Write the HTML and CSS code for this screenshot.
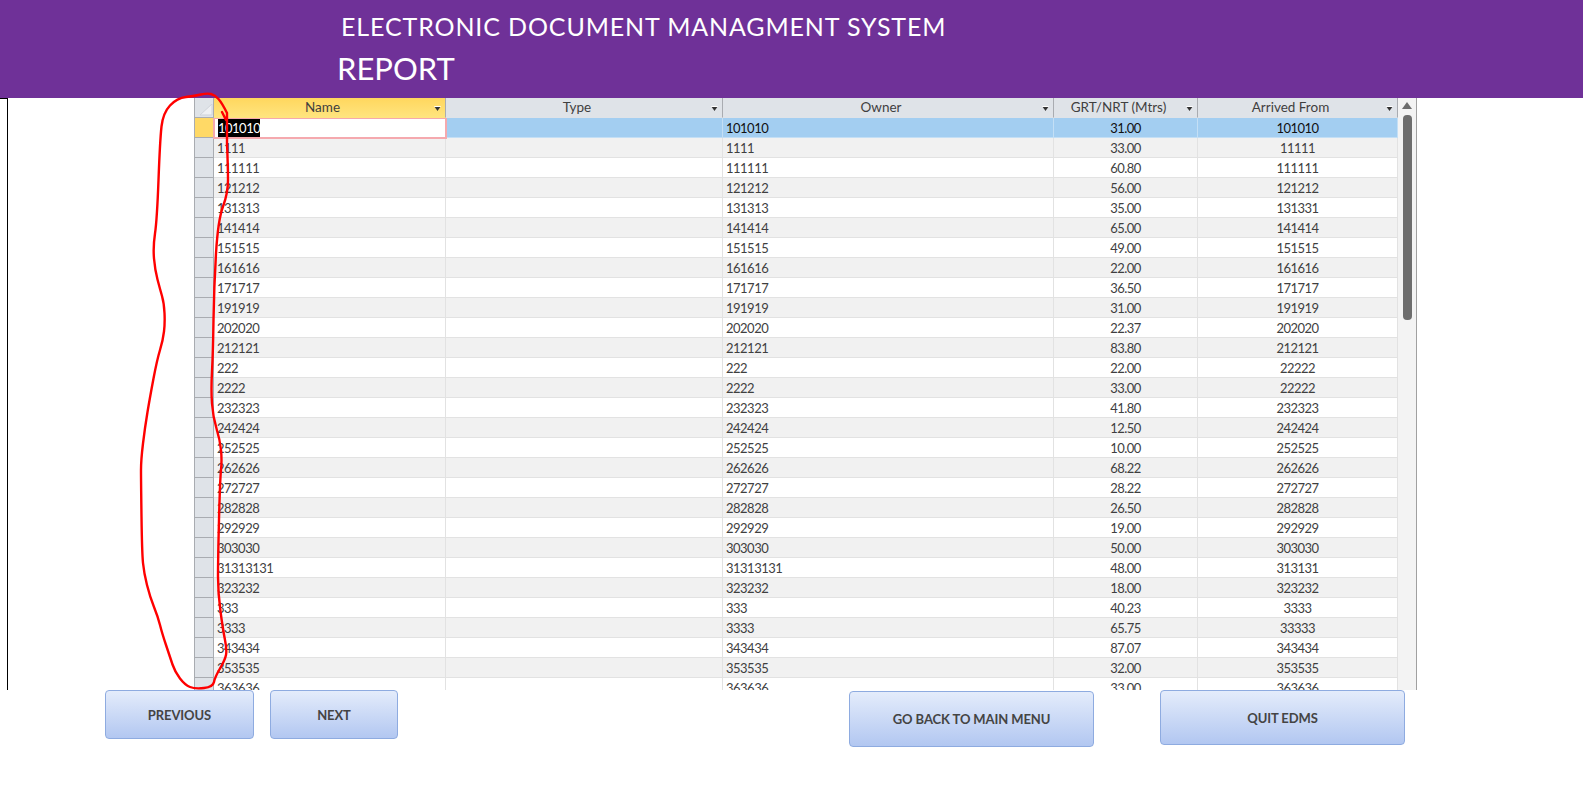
FILE: index.html
```html
<!DOCTYPE html>
<html lang="en">
<head>
    <meta charset="UTF-8">
    <meta name="viewport" content="width=device-width, initial-scale=1.0">
    <title>EDMS Report</title>
    <link rel="stylesheet" href="styles.css">
</head>
<body>
    <header class="banner">
        <div class="banner-title">ELECTRONIC DOCUMENT MANAGMENT SYSTEM</div>
        <div class="banner-sub">REPORT</div>
    </header>

    <main class="content">
        <div class="edge-line"></div>
        <div class="sheet">
            <table class="grid">
                <colgroup>
                    <col class="col-sel">
                    <col class="col-name">
                    <col class="col-type">
                    <col class="col-owner">
                    <col class="col-grt">
                    <col class="col-from">
                </colgroup>
                <thead>
                    <tr>
                        <th class="sel corner">
                            <svg width="13" height="12" viewBox="0 0 13 12"><polygon points="12,0 12,11 0,11" fill="#eef0f3" stroke="#cfd3d9"/></svg>
                        </th>
                        <th class="active">Name</th>
                        <th>Type</th>
                        <th>Owner</th>
                        <th>GRT/NRT (Mtrs)</th>
                        <th>Arrived From</th>
                    </tr>
                </thead>
                <tbody>
                    <tr class="current"><td class="sel"></td><td class="editing"><span class="picked">101010</span></td><td></td><td>101010</td><td class="mid">31.00</td><td class="mid">101010</td></tr>
                    <tr><td class="sel"></td><td>1111</td><td></td><td>1111</td><td class="mid">33.00</td><td class="mid">11111</td></tr>
                    <tr><td class="sel"></td><td>111111</td><td></td><td>111111</td><td class="mid">60.80</td><td class="mid">111111</td></tr>
                    <tr><td class="sel"></td><td>121212</td><td></td><td>121212</td><td class="mid">56.00</td><td class="mid">121212</td></tr>
                    <tr><td class="sel"></td><td>131313</td><td></td><td>131313</td><td class="mid">35.00</td><td class="mid">131331</td></tr>
                    <tr><td class="sel"></td><td>141414</td><td></td><td>141414</td><td class="mid">65.00</td><td class="mid">141414</td></tr>
                    <tr><td class="sel"></td><td>151515</td><td></td><td>151515</td><td class="mid">49.00</td><td class="mid">151515</td></tr>
                    <tr><td class="sel"></td><td>161616</td><td></td><td>161616</td><td class="mid">22.00</td><td class="mid">161616</td></tr>
                    <tr><td class="sel"></td><td>171717</td><td></td><td>171717</td><td class="mid">36.50</td><td class="mid">171717</td></tr>
                    <tr><td class="sel"></td><td>191919</td><td></td><td>191919</td><td class="mid">31.00</td><td class="mid">191919</td></tr>
                    <tr><td class="sel"></td><td>202020</td><td></td><td>202020</td><td class="mid">22.37</td><td class="mid">202020</td></tr>
                    <tr><td class="sel"></td><td>212121</td><td></td><td>212121</td><td class="mid">83.80</td><td class="mid">212121</td></tr>
                    <tr><td class="sel"></td><td>222</td><td></td><td>222</td><td class="mid">22.00</td><td class="mid">22222</td></tr>
                    <tr><td class="sel"></td><td>2222</td><td></td><td>2222</td><td class="mid">33.00</td><td class="mid">22222</td></tr>
                    <tr><td class="sel"></td><td>232323</td><td></td><td>232323</td><td class="mid">41.80</td><td class="mid">232323</td></tr>
                    <tr><td class="sel"></td><td>242424</td><td></td><td>242424</td><td class="mid">12.50</td><td class="mid">242424</td></tr>
                    <tr><td class="sel"></td><td>252525</td><td></td><td>252525</td><td class="mid">10.00</td><td class="mid">252525</td></tr>
                    <tr><td class="sel"></td><td>262626</td><td></td><td>262626</td><td class="mid">68.22</td><td class="mid">262626</td></tr>
                    <tr><td class="sel"></td><td>272727</td><td></td><td>272727</td><td class="mid">28.22</td><td class="mid">272727</td></tr>
                    <tr><td class="sel"></td><td>282828</td><td></td><td>282828</td><td class="mid">26.50</td><td class="mid">282828</td></tr>
                    <tr><td class="sel"></td><td>292929</td><td></td><td>292929</td><td class="mid">19.00</td><td class="mid">292929</td></tr>
                    <tr><td class="sel"></td><td>303030</td><td></td><td>303030</td><td class="mid">50.00</td><td class="mid">303030</td></tr>
                    <tr><td class="sel"></td><td>31313131</td><td></td><td>31313131</td><td class="mid">48.00</td><td class="mid">313131</td></tr>
                    <tr><td class="sel"></td><td>323232</td><td></td><td>323232</td><td class="mid">18.00</td><td class="mid">323232</td></tr>
                    <tr><td class="sel"></td><td>333</td><td></td><td>333</td><td class="mid">40.23</td><td class="mid">3333</td></tr>
                    <tr><td class="sel"></td><td>3333</td><td></td><td>3333</td><td class="mid">65.75</td><td class="mid">33333</td></tr>
                    <tr><td class="sel"></td><td>343434</td><td></td><td>343434</td><td class="mid">87.07</td><td class="mid">343434</td></tr>
                    <tr><td class="sel"></td><td>353535</td><td></td><td>353535</td><td class="mid">32.00</td><td class="mid">353535</td></tr>
                    <tr><td class="sel"></td><td>363636</td><td></td><td>363636</td><td class="mid">33.00</td><td class="mid">363636</td></tr>
                </tbody>
            </table>
            <div class="scrollbar">
                <div class="scroll-up"></div>
                <div class="scroll-thumb"></div>
            </div>
        </div>
    </main>

    <footer class="actions">
        <button class="btn btn-prev">PREVIOUS</button>
        <button class="btn btn-next">NEXT</button>
        <button class="btn btn-menu">GO BACK TO MAIN MENU</button>
        <button class="btn btn-quit">QUIT EDMS</button>
    </footer>

    <!-- red pen mark drawn over the screen -->
    <svg class="ink" width="240" height="700" viewBox="0 0 240 700">
        <path d="M222,112 L226,120 M227,113 Q222,103 218.5,99 Q215,95 211,94 Q207,93 201,94.5 Q195,96 186,97 Q177,98 170,105.5 Q163,113 161.5,126.5 Q160,140 158.5,180 Q157,220 155,233.5 Q153,247 154,258.5 Q155,270 157.5,279.5 Q160,289 162,296 Q164,303 164.5,313 Q165,323 164,331.5 Q163,340 160,350 Q157,360 153.5,378.5 Q150,397 147.5,412 Q145,427 143,443.5 Q141,460 141,470 Q141,480 141.5,516.5 Q142,553 143,563 Q144,573 147,585 Q150,597 154,607 Q158,617 160,625 Q162,633 166,645 Q170,657 172.5,664.5 Q175,672 180,678.5 Q185,685 190,687 Q195,689 204,688 Q213,687 214,682 Q215,677 220,668.5 Q225,660 226,655 Q227,650 225,640 Q223,630 220.5,611.5 Q218,593 218,576.5 Q218,560 219,520 Q220,480 221,470 Q222,460 221,450 Q220,440 216.5,428.5 Q213,417 212,403.5 Q211,390 212,371.5 Q213,353 213.5,320 Q214,287 216,253.5 Q218,220 223,206.5 Q228,193 228,180 Q228,167 227,143.5 L227,113" fill="none" stroke="#f00" stroke-width="2.4" stroke-linecap="round" stroke-linejoin="round"/>
    </svg>
</body>
</html>
```

FILE: styles.css
```css
/* Page */
body {
    margin: 0;
    height: 790px;
    overflow: hidden;
    position: relative;
    background-color: #fff;
    font-family: Lato, "Open Sans", sans-serif;
    color: #3f3f3f;
}

/* Purple banner */
.banner {
    height: 98px;
    box-sizing: border-box;
    background-color: #6f3198;
    color: #fff;
    padding: 10px 0 0 337px;
}

.banner-title {
    margin-left: 4px;
    font-size: 25px;
    line-height: 32px;
    letter-spacing: 0.87px;
}

.banner-sub {
    margin-top: 6px;
    font-size: 31px;
    line-height: 40px;
}

/* Area under the banner */
.content {
    display: flex;
    height: 592px;
    overflow: hidden;
}

.edge-line {
    width: 7px;
    border-top: 1px solid #000;
    border-right: 1px solid #000;
}

.sheet {
    display: flex;
    align-items: flex-start;
    margin-left: 186px;
}

/* Datasheet */
.grid {
    width: 1204px;
    table-layout: fixed;
    border-collapse: separate;
    border-spacing: 0;
    font-size: 13px;
    letter-spacing: -0.5px;
}

.col-sel { width: 20px; }
.col-name { width: 232px; }
.col-type { width: 277px; }
.col-owner { width: 331px; }
.col-grt { width: 144px; }
.col-from { width: 200px; }

.grid th,
.grid td {
    height: 20px;
    box-sizing: border-box;
    padding: 1px 0 0 3px;
    border-right: 1px solid #e2e2e2;
    border-bottom: 1px solid #e2e2e2;
    white-space: nowrap;
    overflow: hidden;
}

.grid th {
    position: relative;
    padding: 0 14px 2px 0;
    background-color: #dfe3e8;
    border-right-color: #a9acb1;
    border-bottom-color: #dfe3e8;
    font-size: 13.5px;
    font-weight: normal;
    text-align: center;
    letter-spacing: 0;
}

.grid th::after {
    content: "";
    position: absolute;
    right: 4px;
    top: 8px;
    width: 7px;
    height: 5px;
    background: linear-gradient(#fff 1px, #333 1px);
    clip-path: polygon(0 0, 100% 0, 50% 100%);
}

.grid th.corner {
    padding: 0;
}

.grid th.corner::after {
    display: none;
}

.grid th.corner svg {
    display: block;
    margin: 4px 0 0 5px;
}

.grid th.active {
    background: linear-gradient(#ffd75e, #ffe47e);
    border-bottom-color: #ffe47e;
}

.grid tbody tr:nth-child(even) td {
    background-color: #f1f1f1;
}

.grid td.mid {
    padding: 1px 0 0;
    text-align: center;
}

.grid .sel,
.grid tbody tr:nth-child(even) td.sel {
    background-color: #dfe3e8;
    border-left: 1px solid #a9acb1;
    border-right: 1px solid #a9acb1;
    border-bottom: 1px solid #a9acb1;
    padding: 0;
}

.grid th.sel {
    border-bottom-color: #a9acb1;
}

/* Current record */
.grid tr.current td {
    background-color: #a3cef1;
    color: #111;
    border-right-color: #c4dff5;
    border-bottom-color: #c4dff5;
}

.grid tr.current td.sel {
    background-color: #ffd966;
    border-right-color: #a9acb1;
    border-bottom-color: #a9acb1;
}

.grid tr.current td.editing {
    background-color: #fff;
    outline: 2px solid #f5a9ae;
    outline-offset: -1px;
}

.picked {
    display: inline-block;
    margin-left: 1px;
    line-height: 18px;
    background-color: #000;
    color: #fff;
}

/* Scrollbar */
.scrollbar {
    width: 19px;
    height: 592px;
    box-sizing: border-box;
    background-color: #f3f3f3;
    border-right: 1px solid #a0a0a0;
    padding: 4px 0 0 4px;
}

.scroll-up {
    width: 0;
    border-left: 5px solid transparent;
    border-right: 5px solid transparent;
    border-bottom: 7px solid #6d6d6d;
}

.scroll-thumb {
    width: 9px;
    height: 205px;
    margin: 6px 0 0 1px;
    background-color: #6d6d6d;
    border-radius: 4px;
}

/* Buttons */
.actions {
    display: flex;
    align-items: flex-start;
    padding-left: 105px;
}

.btn {
    box-sizing: border-box;
    padding: 0;
    border: 1px solid #8eabe0;
    border-radius: 4px;
    background: linear-gradient(#e4ecfb, #b2c7f1);
    color: #444;
    font-family: inherit;
    font-size: 13px;
    font-weight: bold;
    letter-spacing: -0.1px;
}

.btn-prev {
    width: 149px;
    height: 49px;
}

.btn-next {
    width: 128px;
    height: 49px;
    margin-left: 16px;
}

.btn-menu {
    width: 245px;
    height: 56px;
    margin-left: 451px;
    margin-top: 1px;
}

.btn-quit {
    width: 245px;
    height: 55px;
    margin-left: 66px;
}

/* Red pen mark */
.ink {
    position: absolute;
    top: 0;
    left: 0;
    pointer-events: none;
}
```
